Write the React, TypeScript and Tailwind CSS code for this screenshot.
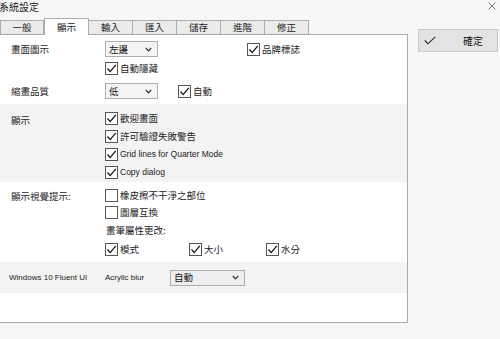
import React from 'react';

const cjk = { fontFamily: '"Noto Sans CJK TC", "Noto Sans", sans-serif' };
const latin = { fontFamily: '"Liberation Sans", "Noto Sans CJK TC", sans-serif' };

const tabs = ['一般', '顯示', '輸入', '匯入', '儲存', '進階', '修正'];

function Box({ checked }: { checked: boolean }) {
  return (
    <span className="w-[13px] h-[13px] shrink-0 border border-[#555] bg-white flex items-center justify-center">
      {checked && (
        <svg width="11" height="11" viewBox="0 0 11 11">
          <polyline points="1.5,5.5 4.2,8.6 9.8,1.8" fill="none" stroke="#111" strokeWidth="1.3" />
        </svg>
      )}
    </span>
  );
}

function Check({ label, checked = true, latinText = false }: { label: string; checked?: boolean; latinText?: boolean }) {
  return (
    <div className="flex items-center gap-[2px] whitespace-nowrap">
      <Box checked={checked} />
      <span className={latinText ? 'text-[8.5px] text-[#222]' : 'text-[9.5px] text-[#222]'} style={latinText ? latin : cjk}>
        {label}
      </span>
    </div>
  );
}

function Select({ value, w, dark = false }: { value: string; w: string; dark?: boolean }) {
  return (
    <div className={`${w} h-[16px] border border-[#adadad] ${dark ? 'bg-[#eeeeee]' : 'bg-[#f4f4f4]'} flex items-center justify-between pl-[3px] pr-[5px]`}>
      <span className="text-[9.5px] text-[#111]" style={cjk}>{value}</span>
      <svg width="7" height="5" viewBox="0 0 7 5">
        <polyline points="0.8,1 3.5,3.8 6.2,1" fill="none" stroke="#333" strokeWidth="1.2" />
      </svg>
    </div>
  );
}

export default function App() {
  return (
    <div className="w-[500px] h-[339px] bg-[#f7f7f7] overflow-hidden text-[#222] text-[9.5px]" style={cjk}>
      {/* title bar */}
      <div className="h-[19px] flex items-start justify-between">
        <span className="text-[10px] leading-[14px] -ml-[1px] text-[#222]">系統設定</span>
        <svg className="mt-[2px] mr-[4px]" width="8" height="8" viewBox="0 0 8 8">
          <path d="M0.5 0.5 L7.5 7.5 M7.5 0.5 L0.5 7.5" stroke="#666" strokeWidth="0.9" />
        </svg>
      </div>

      <div className="flex items-start">
        <div className="w-[408px] flex flex-col">
          {/* tabs */}
          <div className="flex items-end h-[15px] relative z-10">
            {tabs.map((t, i) =>
              i === 1 ? (
                <div
                  key={t}
                  className="w-[45px] h-[17px] -mb-[1px] bg-white border border-b-0 border-[#adadad] flex items-center justify-center text-[9.5px] text-[#111]"
                >
                  {t}
                </div>
              ) : (
                <div
                  key={t}
                  className={`w-[44px] h-[14px] bg-[#ebebeb] border border-b-0 border-[#adadad] ${i > 1 ? 'border-l-0' : ''} flex items-center justify-center text-[9.5px] text-[#222]`}
                >
                  {t}
                </div>
              )
            )}
          </div>

          {/* panel */}
          <div className="h-[289px] bg-white border border-l-0 border-[#a9a9a9] flex flex-col">
            <div className="flex flex-col pt-[6px] pb-[5px]">
              <div className="flex items-center h-[16px]">
                <span className="w-[105px] pl-[11px]">畫面圖示</span>
                <Select value="左邊" w="w-[53px]" />
                <div className="ml-[89px]">
                  <Check label="品牌標誌" />
                </div>
              </div>
              <div className="flex items-center h-[13px] mt-[5px] pl-[105px]">
                <Check label="自動隱藏" />
              </div>
              <div className="flex items-center h-[16px] mt-[8px]">
                <span className="w-[105px] pl-[11px]">縮畫品質</span>
                <Select value="低" w="w-[53px]" />
                <div className="ml-[20px]">
                  <Check label="自動" />
                </div>
              </div>
            </div>

            <div className="bg-[#f3f3f3] flex pt-[5px] pb-[1px]">
              <span className="w-[105px] pl-[11px] mt-[4px]">顯示</span>
              <div className="flex flex-col">
                <div className="h-[18px] flex items-center"><Check label="歡迎畫面" /></div>
                <div className="h-[18px] flex items-center"><Check label="許可驗證失敗警告" /></div>
                <div className="h-[18px] flex items-center"><Check label="Grid lines for Quarter Mode" latinText /></div>
                <div className="h-[18px] flex items-center"><Check label="Copy dialog" latinText /></div>
              </div>
            </div>

            <div className="flex pt-[5px] pb-[3px]">
              <span className="w-[105px] pl-[11px] mt-[2px]">顯示視覺提示:</span>
              <div className="flex flex-col">
                <div className="h-[17px] flex items-center"><Check label="橡皮擦不干淨之部位" checked={false} /></div>
                <div className="h-[17px] flex items-center"><Check label="圖層互換" checked={false} /></div>
                <div className="h-[19px] flex items-center pl-[1px]">畫筆屬性更改:</div>
                <div className="h-[19px] flex items-center">
                  <div className="w-[84px]"><Check label="模式" /></div>
                  <div className="w-[77px]"><Check label="大小" /></div>
                  <Check label="水分" />
                </div>
              </div>
            </div>

            <div className="bg-[#f3f3f3] h-[31px] flex items-center whitespace-nowrap">
              <span className="w-[105px] shrink-0 pl-[9px] text-[8px] text-[#222]" style={latin}>Windows 10 Fluent UI</span>
              <span className="w-[65px] shrink-0 text-[8px] text-[#222]" style={latin}>Acrylic blur</span>
              <Select value="自動" w="w-[75px]" dark />
            </div>
          </div>
        </div>

        {/* confirm button */}
        <div className="ml-[10px] mt-[10px] w-[80px] h-[23px] bg-[#e3e3e3] border border-[#c8c8c8] flex items-center">
          <svg className="ml-[5px]" width="12" height="9" viewBox="0 0 12 9">
            <polyline points="0.8,4.5 4,7.8 11.2,0.8" fill="none" stroke="#222" strokeWidth="1.1" />
          </svg>
          <span className="ml-[27px] text-[10px] text-[#111]">確定</span>
        </div>
      </div>
    </div>
  );
}
